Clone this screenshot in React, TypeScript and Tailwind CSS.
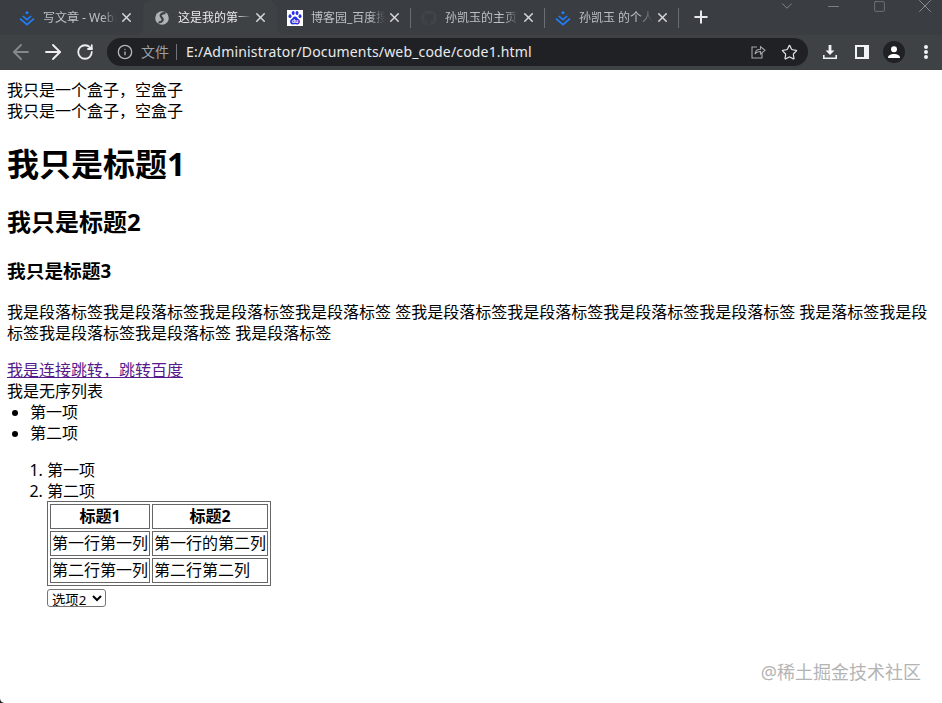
import React from "react";
import { ArrowLeft, ArrowRight, RotateCw, Info, Star, X, Plus, Minus, Square, ChevronDown } from "lucide-react";
import { FaGithub } from "react-icons/fa";

const Juejin = () => (
  <svg width="16" height="16" viewBox="0 0 16 16" fill="none" className="shrink-0">
    <path d="M8 1 10 2.800 8 4.600 6 2.800Z" fill="#1e80ff" />
    <path d="M3.800 6 8 9.600 12.200 6" stroke="#1e80ff" strokeWidth="1.6" />
    <path d="M1 8.600 8 14.600 15 8.600" stroke="#1e80ff" strokeWidth="1.6" />
  </svg>
);

const Globe = () => (
  <svg width="16" height="16" viewBox="0 0 16 16" fill="none" className="shrink-0">
    <circle cx="8" cy="8" r="6.8" fill="#b0b3b6" />
    <path d="M11.500 3.200C8.500 2.600 5 4.800 7.500 7.300 10 9.500 8.200 12.800 4.500 12.300" stroke="#3f4245" strokeWidth="2.2" />
  </svg>
);

const Baidu = () => (
  <svg width="16" height="16" viewBox="0 0 16 16" className="shrink-0">
    <rect width="16" height="16" fill="#fff" />
    <ellipse cx="3" cy="6.200" rx="1.500" ry="1.900" fill="#2932e1" />
    <ellipse cx="6.200" cy="3" rx="1.500" ry="1.900" fill="#2932e1" />
    <ellipse cx="10" cy="3" rx="1.500" ry="1.900" fill="#2932e1" />
    <ellipse cx="13" cy="6.200" rx="1.500" ry="1.900" fill="#2932e1" />
    <path d="M8 6.400C6 6.400 5.600 8.400 4 9.600 2.400 10.800 2.800 14.800 6 14.400 7.400 14.200 8.600 14.200 10 14.400 13.200 14.800 13.600 10.800 12 9.600 10.400 8.400 10 6.400 8 6.400Z" fill="#2932e1" />
    <text x="8" y="13" textAnchor="middle" fontSize="5.500" fontWeight="700" fill="#fff" fontFamily="Liberation Sans, sans-serif">du</text>
  </svg>
);

type TabProps = { icon: React.ReactNode; title: string; active?: boolean; divider?: boolean; corner?: "left" | "right" };

const Tab = ({ icon, title, active, divider, corner }: TabProps) => {
  // 紧挨当前标签的两个标签，底部要有一个小圆角
  const inner = corner === "right"
    ? "flex items-center w-[134px] h-[35px] pl-[10px] bg-[#3a3d41] rounded-br-lg"
    : corner === "left"
      ? "flex items-center w-[134px] h-[35px] pl-[10px] bg-[#3a3d41] rounded-bl-lg"
      : active
        ? "flex items-center w-[134px] h-[35px] pl-[11px] bg-[#3f4245] rounded-t-[9px]"
        : "flex items-center w-[134px] h-[35px] pl-[10px] bg-[#3a3d41]";
  return (
    <div className={corner ? "bg-[#3f4245]" : ""}>
      <div className={inner}>
        {icon}
        <span className={active
          ? "ml-2 w-[73px] overflow-hidden whitespace-nowrap text-xs text-[#e8eaed] [mask-image:linear-gradient(to_right,black_80%,transparent)]"
          : "ml-2 w-[74px] overflow-hidden whitespace-nowrap text-xs text-[#bdc1c6] [mask-image:linear-gradient(to_right,black_80%,transparent)]"}>{title}</span>
        <X size={15} strokeWidth={2.4} className="ml-[2px] shrink-0 text-[#d5d7da]" />
        <div className={divider ? "ml-auto w-px h-5 bg-[#6a6d71]" : "hidden"} />
      </div>
    </div>
  );
};

export default function App() {
  return (
    <div className="relative w-full h-[703px] overflow-hidden bg-white text-black text-base leading-[21px] font-['Noto_Sans','Noto_Sans_CJK_SC',sans-serif]">
      {/* 标签栏 */}
      <div className="flex h-[35px] pl-[9px] bg-[#3a3d41]">
        <Tab icon={<Juejin />} title="写文章 - Web前端" corner="right" />
        <Tab icon={<Globe />} title="这是我的第一个网页" active />
        <Tab icon={<Baidu />} title="博客园_百度搜索" divider corner="left" />
        <Tab icon={<FaGithub size={16} className="shrink-0 text-[#414448]" />} title="孙凯玉的主页 - 个人" divider />
        <Tab icon={<Juejin />} title="孙凯玉 的个人主页" divider />
        <Plus size={20} strokeWidth={2.4} className="ml-[12px] mt-[7px] text-[#e8eaed]" />
        <div className="ml-auto -mr-[6px] flex items-center h-3 text-[#8f9296]">
          <div className="flex justify-center w-[46px]"><ChevronDown size={18} strokeWidth={1.1} /></div>
          <div className="flex justify-center w-[46px]"><Minus size={17} strokeWidth={1.1} /></div>
          <div className="flex justify-center w-[46px]"><Square size={13} strokeWidth={1.1} /></div>
          <div className="flex justify-center w-[46px]"><X size={22} strokeWidth={1} /></div>
        </div>
      </div>
      {/* 地址栏 */}
      <div className="flex items-center h-[35px] pb-px pl-[9px] bg-[#3f4245]">
        <ArrowLeft size={24} strokeWidth={1.9} className="text-[#85888b]" />
        <ArrowRight size={24} strokeWidth={1.9} className="ml-2 text-[#eceef0]" />
        <RotateCw size={18} strokeWidth={2.4} className="ml-[11px] text-[#eceef0]" />
        <div className="ml-[13px] flex items-center w-[701px] h-7 rounded-full bg-[#202124] pl-[10px]">
          <Info size={16} className="text-[#b5b8bb]" />
          <span className="ml-2 text-sm text-[#9aa0a6]">文件</span>
          <div className="ml-[7px] w-px h-4 bg-[#70757a]" />
          <span className="ml-[9px] text-sm tracking-[0.17px] text-[#e8eaed]">E:/Administrator/Documents/web_code/code1.html</span>
          <svg width="16" height="16" viewBox="0 0 16 16" fill="none" stroke="#a4a7aa" strokeWidth="1.1" className="ml-auto">
            <path d="M7 3H2v11h10V9" />
            <path d="M5 10C5.400 6.600 8 5.200 10.500 5.200V2.600L15 6.300 10.500 10V7.500C8 7.500 6.200 8.200 5 10Z" />
          </svg>
          <Star size={17} strokeWidth={1.7} className="ml-[15px] mr-[10px] text-[#dfe1e5]" />
        </div>
        <svg width="16" height="16" viewBox="0 0 16 16" fill="#f1f3f4" className="ml-[14px]">
          <path d="M6.600 1h2.800v5.400h3L8 11 3.600 6.400h3Z" />
          <path d="M1 11h1.600v2.500h10.800V11H15v4H1Z" />
        </svg>
        <div className="ml-[17px] w-[14px] h-[14px] border-2 border-[#f1f3f4] flex justify-end">
          <div className="w-[3px] bg-[#f1f3f4]" />
        </div>
        <div className="ml-[14px] flex items-center justify-center w-[22px] h-[22px] rounded-full bg-[#202124]">
          <svg width="14" height="14" viewBox="0 0 14 14" fill="#fff">
            <circle cx="7" cy="4.200" r="3" />
            <path d="M1 13c0-3 3-4 6-4s6 1 6 4Z" />
          </svg>
        </div>
        <div className="ml-[19px] flex flex-col gap-px">
          <div className="w-1 h-1 rounded-full bg-[#f1f3f4]" />
          <div className="w-1 h-1 rounded-full bg-[#f1f3f4]" />
          <div className="w-1 h-1 rounded-full bg-[#f1f3f4]" />
        </div>
      </div>
      {/* 网页内容 */}
      <div className="pl-[7px] pt-[10px]">
        <div>我只是一个盒子，空盒子</div>
        <div>我只是一个盒子，空盒子</div>
        <h1 className="mt-[21px] text-[32px] leading-[42px] font-bold">我只是标题1</h1>
        <h2 className="mt-[21px] text-2xl leading-[32px] font-bold">我只是标题2</h2>
        <h3 className="mt-5 text-[18.72px] leading-[25px] font-bold">我只是标题3</h3>
        <p className="mt-[19px]">我是段落标签我是段落标签我是段落标签我是段落标签 签我是段落标签我是段落标签我是段落标签我是段落标签 我是落标签我是段标签我是段落标签我是段落标签 我是段落标签</p>
        <a href="#" className="block mt-4 underline text-[#551a8b]">我是连接跳转，跳转百度</a>
        <div>我是无序列表</div>
        <ul className="list-disc pl-[23px]">
          <li>第一项</li>
          <li>第二项</li>
        </ul>
        <ol className="mt-4 list-decimal pl-10">
          <li>第一项</li>
          <li>第二项</li>
        </ol>
        <div className="pl-10 -mt-px">
          <table className="border-separate border-spacing-[2px] border border-[#666666]">
            <tbody>
              <tr>
                <th className="border border-[#666666] p-px font-bold">标题1</th>
                <th className="border border-[#666666] p-px font-bold">标题2</th>
              </tr>
              <tr>
                <td className="border border-[#666666] p-px">第一行第一列</td>
                <td className="border border-[#666666] p-px">第一行的第二列</td>
              </tr>
              <tr>
                <td className="border border-[#666666] p-px">第二行第一列</td>
                <td className="border border-[#666666] p-px">第二行第二列</td>
              </tr>
            </tbody>
          </table>
          <select defaultValue="2" className="block mt-[3px] h-[18px] w-[59px] border border-[#767676] rounded-[3px] bg-white text-[13.33px] leading-none">
            <option value="1">选项1</option>
            <option value="2">选项2</option>
          </select>
        </div>
      </div>
      {/* 水印 */}
      <div className="absolute right-[21px] top-[660px] text-lg leading-6 text-[#b4b4b4]">@稀土掘金技术社区</div>
      <svg width="6" height="5" viewBox="0 0 6 5" className="absolute left-0 bottom-0">
        <path d="M0 0C0 3 2 5 6 5H0Z" fill="#222" />
      </svg>
    </div>
  );
}
